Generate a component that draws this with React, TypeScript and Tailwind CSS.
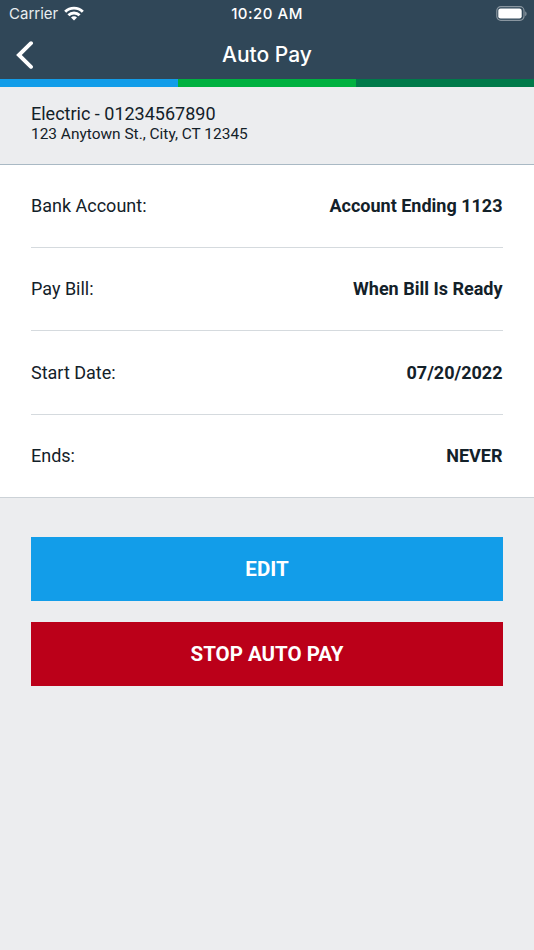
import React from 'react';

const details = [
  { label: 'Bank Account:', value: 'Account Ending 1123' },
  { label: 'Pay Bill:', value: 'When Bill Is Ready' },
  { label: 'Start Date:', value: '07/20/2022' },
  { label: 'Ends:', value: 'NEVER' },
];

const StatusBar: React.FC = () => (
  <div className="grid h-[29px] grid-cols-3 items-center px-[7px] font-['Inter',sans-serif] text-[15px] text-[#e9eef0]">
    <div className="flex items-center gap-1.5 pl-0.5">
      <span>Carrier</span>
      <svg className="relative -top-px" width="20" height="15" viewBox="0 0 20 15" fill="none" stroke="#fff" strokeWidth="2.9">
        <path d="M1.2 5.7C6 .9 14 .9 18.8 5.7" />
        <path d="M4.4 9.2C7.5 6.2 12.5 6.2 15.6 9.2" />
        <path d="M7 11.6a4.2 4.2 0 0 1 6 0L10 14.6Z" fill="#fff" stroke="none" />
      </svg>
    </div>
    <span className="text-center font-medium tracking-[0.5px] text-white">10:20 AM</span>
    <svg className="relative -top-px justify-self-end" width="31" height="15" viewBox="0 0 31 15">
      <rect x=".8" y=".7" width="27.2" height="13.6" rx="4" fill="none" stroke="#8996a0" strokeWidth="1.2" />
      <rect x="2.3" y="2.5" width="23.4" height="10" rx="2.2" fill="#fff" />
      <path d="M29.2 5.2v5q1.4-.8 1.4-2.5t-1.4-2.5" fill="#8996a0" />
    </svg>
  </div>
);

const App: React.FC = () => (
  <div className="min-h-[950px] bg-[#ecedef] font-['Roboto',sans-serif] text-[#132129]">
    <header className="bg-[#304758]">
      <StatusBar />
      <div className="grid h-[50px] grid-cols-[60px_1fr_60px] items-center">
        <button aria-label="Back" className="pl-4 pt-px">
          <svg width="18" height="28" viewBox="0 0 18 28" fill="none" stroke="#fff" strokeWidth="3.9" strokeLinecap="round">
            <path d="M15 2.2 2.9 14 15 25.8" />
          </svg>
        </button>
        <h1 className="pt-0.5 text-center font-['Inter',sans-serif] text-[21px] font-medium text-white">Auto Pay</h1>
      </div>
      <div className="grid h-2 grid-cols-3">
        <div className="bg-[#129de9]" />
        <div className="bg-[#00b140]" />
        <div className="bg-[#007a4a]" />
      </div>
    </header>
    <section className="h-[77px] px-[31px] pt-4">
      <h2 className="text-[18px] leading-[22px]">Electric - 01234567890</h2>
      <p className="text-[15.45px] leading-[18px]">123 Anytown St., City, CT 12345</p>
    </section>
    <dl className="border-y border-t-[#a9b9c4] border-b-[#ccd2d7] bg-white px-[31px]">
      {details.map((item) => (
        <div
          key={item.label}
          className="flex h-[83.2px] items-center justify-between border-b border-[#d5dade] text-[18px] last:h-[82.4px] last:border-b-0 first:pb-px nth-2:pb-px"
        >
          <dt>{item.label}</dt>
          <dd className="pr-[0.5px] font-bold">{item.value}</dd>
        </div>
      ))}
    </dl>
    <div className="flex flex-col gap-[21px] px-[31px] pt-[39px] text-[20.5px] font-bold text-white">
      <button className="h-16 bg-[#129de9]">EDIT</button>
      <button className="h-16 bg-[#bb0019]">STOP AUTO PAY</button>
    </div>
  </div>
);

export default App;
